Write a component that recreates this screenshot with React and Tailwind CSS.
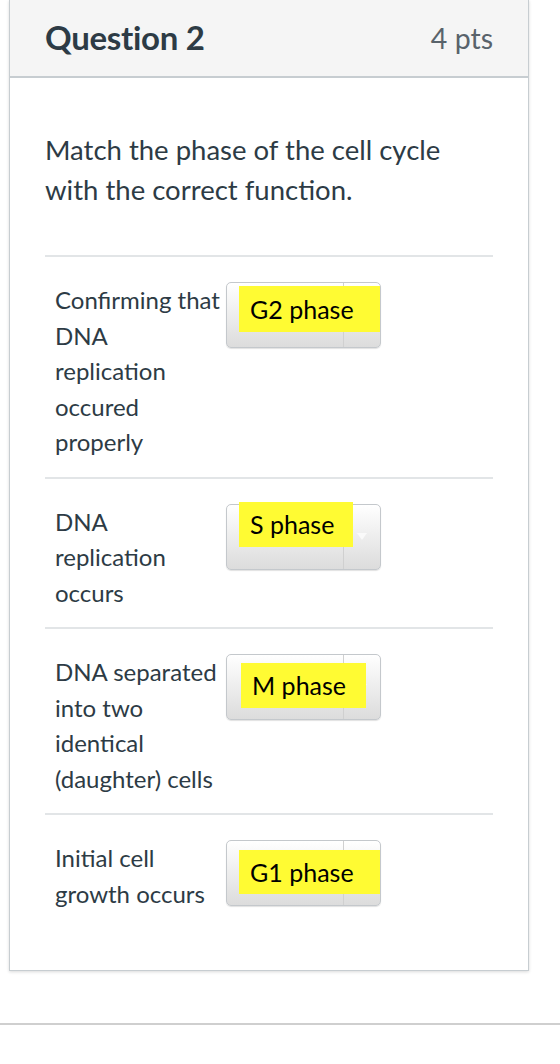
const rows = [
  { lines: ['Confirming that', 'DNA', 'replication', 'occured', 'properly'], answer: 'G2 phase', tag: 'w-[141px] h-[46px] mt-[4px] ml-[13px]' },
  { lines: ['DNA', 'replication', 'occurs'], answer: 'S phase', tag: 'w-[114px] h-[45px] -mt-[2px] ml-[13px]' },
  { lines: ['DNA separated', 'into two', 'identical', '(daughter) cells'], answer: 'M phase', tag: 'w-[125px] h-[45px] mt-[9px] ml-[15px]' },
  { lines: ['Initial cell', 'growth occurs'], answer: 'G1 phase', tag: 'w-[141px] h-[44px] mt-[10px] ml-[13px]' },
];

const AnswerSelect = ({ answer, tag }) => (
  <div className="relative w-[155px] h-[66px] shrink-0">
    <div className="flex h-full rounded-[5px] border border-[#c4c8cc] bg-gradient-to-b from-white to-[#dcdcdc] shadow-[0_1px_1px_rgba(0,0,0,0.12)]">
      <div className="flex-1" />
      <div className="w-[37px] border-l border-[#d0d0d0] flex items-center justify-center">
        <svg width="10" height="7" viewBox="0 0 10 7">
          <path d="M0 0 L10 0 L5 7 Z" fill="#fafafa" />
        </svg>
      </div>
    </div>
    <div className="absolute inset-0">
      <div className={`${tag} bg-[#fffb33] flex items-center pl-[11px] text-[25px] text-black leading-none`} style={{ fontFamily: 'Lato, "Open Sans", sans-serif' }}>
        {answer}
      </div>
    </div>
  </div>
);

export default function App() {
  return (
    <div className="min-h-[1064px] bg-white" style={{ fontFamily: 'Lato, "Liberation Sans", sans-serif' }}>
      <div className="ml-[9px] w-[520px] border-x border-b border-[#c7cdd1] shadow-[0_1px_3px_rgba(0,0,0,0.15)] bg-white">
        <div className="h-[78px] bg-[#f5f5f5] border-b-2 border-[#c7cdd1] flex items-center justify-between px-[35px]">
          <span className="text-[33px] font-bold text-[#2d3b45] tracking-[-0.3px]">Question 2</span>
          <span className="text-[28.5px] text-[#59636b]">4 pts</span>
        </div>
        <div className="px-[35px] pt-[52px] pb-[42px]">
          <p className="text-[27.5px] leading-[40px] text-[#2d3b45] pb-[45px]">
            Match the phase of the cell cycle
            <br />
            with the correct function.
          </p>
          {rows.map((row) => (
            <div key={row.answer} className="flex border-t-2 border-[#e2e5e7] pt-[25px] pb-[17px] pl-[10px]">
              <div className="w-[171px] text-[24px] leading-[35.5px] text-[#2d3b45]">
                {row.lines.map((line) => (
                  <div key={line} className="whitespace-nowrap">{line}</div>
                ))}
              </div>
              <AnswerSelect answer={row.answer} tag={row.tag} />
            </div>
          ))}
        </div>
      </div>
      <div className="mt-[52px] h-[2px] bg-[#cfcfcf]" />
    </div>
  );
}
